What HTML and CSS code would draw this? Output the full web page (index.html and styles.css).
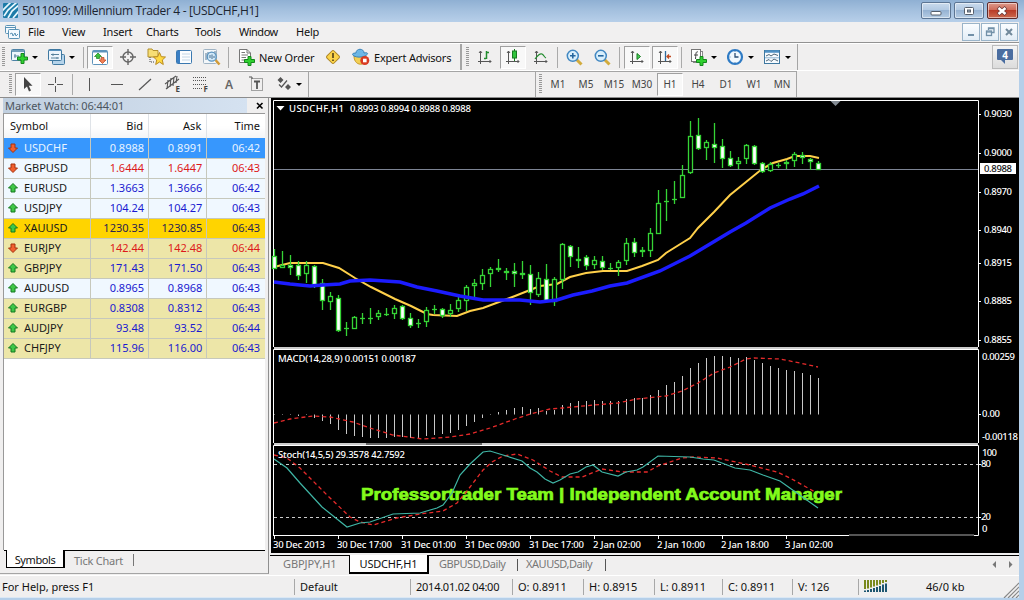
FILE: index.html
```html
<!DOCTYPE html>
<html>

<head>
    <meta charset="UTF-8">
    <title>Millennium Trader 4</title>
    <link rel="stylesheet" href="styles.css">
</head>

<body>
    <div class="titlebar">
        <svg class="logo" width="15" height="15" viewBox="0 0 15 15">
            <rect width="15" height="15" rx="1" fill="#1d7ba8"/>
            <path d="M-1 8 L8 -1 M1 13 L5 7 L14 -1 M5 15 L9 8 L16 2 M10 15 L16 8" stroke="#e8f8ff" stroke-width="1.7" fill="none"/>
        </svg>
        <span class="title">5011099: Millennium Trader 4 - [USDCHF,H1]</span>
        <div class="winbtns">
            <span class="winbtn"><svg width="30" height="15"><rect x="10" y="8.500" width="10" height="3.500" rx="1" fill="#fff" stroke="#555e6b"/></svg></span>
            <span class="winbtn"><svg width="30" height="15"><rect x="10.500" y="4.500" width="9" height="7" rx="1" fill="#fff" stroke="#555e6b"/><rect x="13.500" y="7" width="3" height="2" fill="#9ab" stroke="#555e6b"/></svg></span>
            <span class="winbtn close"><svg width="30" height="15"><path d="M11 4.500 L19 11.500 M19 4.500 L11 11.500" stroke="#6b3a3a" stroke-width="4"/><path d="M11.500 5 L18.500 11 M18.500 5 L11.500 11" stroke="#fff" stroke-width="2.500"/></svg></span>
        </div>
    </div>

    <div class="window">
        <div class="menubar">
            <svg class="menuicon" width="15" height="14" viewBox="0 0 15 14" fill="#f4faff" stroke="#5b93b5">
                <rect x=".5" y=".5" width="10" height="8" rx="1"/><path d="M1 2.500 H10"/>
                <rect x="3.500" y="4.500" width="11" height="9" rx="1"/><path d="M5 9 L7 8 L8 11 L10 8 L11 11 L13 9" fill="none"/>
            </svg>
            <span class="m-file">File</span><span class="m-view">View</span><span class="m-insert">Insert</span><span class="m-charts">Charts</span><span class="m-tools">Tools</span><span class="m-window">Window</span><span>Help</span>
            <div class="mdibtns">
                <span><svg width="16" height="16"><path d="M5 11 H11" stroke="#7190a8" stroke-width="2"/></svg></span>
                <span><svg width="16" height="16" fill="none" stroke="#7190a8" stroke-width="1.300"><path d="M6.500 6 V4 H12 V8.500 H10 M6.500 4.500 H12"/><rect x="4.500" y="7" width="5" height="4.500"/><path d="M4 8 H10"/></svg></span>
                <span><svg width="16" height="16"><path d="M5 5 L11 11 M11 5 L5 11" stroke="#71899b" stroke-width="2"/></svg></span>
            </div>
        </div>

        <div class="toolbar first">
            <i class="grip"></i>
            <span class="dd"><svg width="19" height="18" viewBox="0 0 19 18"><rect x=".5" y="1.500" width="13" height="11" rx="1" fill="#eef6fb" stroke="#4d82a6"/><path d="M1 3 H13" stroke="#4d82a6" stroke-width="1.500"/><path d="M3 8 H8 M4 6 V10" stroke="#58819c"/><path d="M10 5.500 h3 v3.500 h3.500 v3 h-3.500 v3.500 h-3 v-3.500 h-3.500 v-3 h3.500 z" fill="#2fd02f" stroke="#14861c"/></svg><b class="caret"></b></span>
            <span class="dd"><svg width="19" height="18" viewBox="0 0 19 18"><rect x="4.500" y="6.500" width="12" height="10" rx="1" fill="#b5d3ea" stroke="#3f78a0"/><rect x=".5" y="1.500" width="13" height="11" rx="1" fill="#edf5fc" stroke="#3f78a0"/><path d="M1 2.500 H13" stroke="#5590bd"/><path d="M3 6.500 H11 M3 10 H11 M5 5.500 V8 M9 9 V11" stroke="#58819c"/></svg><b class="caret"></b></span>
            <i class="sep"></i>
            <span class="tool on"><svg width="16" height="17" viewBox="0 0 16 17"><rect x=".5" y="1.500" width="15" height="14" rx="1" fill="#fff" stroke="#5d93bb"/><path d="M1 2.500 H15" stroke="#5d93bb" stroke-width="2"/><path d="M6 4 l3.500 3.500 h-2 v2 h-3 v-2 h-2 z" fill="#3cc23c" stroke="#1d8020" stroke-width=".7"/><path d="M10.500 14.500 l3.500 -3.500 h-2 v-2.500 h-3 v2.500 h-2 z" fill="#f08055" stroke="#b4421c" stroke-width=".7"/></svg></span>
            <span class="tool"><svg width="16" height="16" viewBox="0 0 16 16" fill="none" stroke="#666" stroke-width="1.400"><circle cx="8" cy="8" r="5"/><path d="M8 0 V6 M8 10 V16 M0 8 H6 M10 8 H16"/></svg></span>
            <span class="tool"><svg width="19" height="18" viewBox="0 0 19 18"><path d="M1 4 V1 H5 L6 2.500 H11 V9 H1 Z" fill="#f7de74" stroke="#b3902c"/><path d="M3 9 V14 H8" fill="none" stroke="#444" stroke-dasharray="1 1"/><path d="M12.500 4.500 L14.300 8.700 L18.500 9 L15.300 12 L16.300 16.500 L12.500 14 L8.700 16.500 L9.700 12 L6.500 9 L10.700 8.700 Z" fill="#ffd942" stroke="#b98a1c"/></svg></span>
            <span class="tool"><svg width="17" height="16" viewBox="0 0 17 16"><rect x=".5" y="1.500" width="15" height="13" rx="1" fill="#fbfdff" stroke="#3a78b0"/><rect x="1" y="2" width="3" height="12" fill="#3b7fc4"/><path d="M6 5 H14 M6 8 H14 M6 11 H14" stroke="#c3d6e6"/></svg></span>
            <span class="tool"><svg width="18" height="18" viewBox="0 0 18 18"><rect x=".5" y="1.500" width="13" height="14" rx="1" fill="#f3f7fa" stroke="#9fb3c4"/><path d="M3 12 V5 M5 10 V4 M12 8 V3" stroke="#5b7b95"/><path d="M12.500 12 L16.500 16.500" stroke="#d29a35" stroke-width="2.500"/><circle cx="8.700" cy="8.700" r="4.500" fill="#cbe6f8" fill-opacity=".85" stroke="#5a93bf" stroke-width="1.300"/><path d="M7 10 V7 M9 11 V6.500 M11 10 V8" stroke="#486f90"/></svg></span>
            <i class="sep order"></i>
            <span class="tool text neworder"><svg width="18" height="18" viewBox="0 0 18 18"><path d="M1.500 1.500 H9 L12.500 5 V14.500 H1.500 Z" fill="#fff" stroke="#777"/><path d="M9 1.500 V5 H12.500 M3.500 4.500 H7 M3.500 7 H10 M3.500 9.500 H8 M3.500 12 H7" fill="none" stroke="#777"/><path d="M10 8.500 h3 v3 h3.500 v3 h-3.500 v3 h-3 v-3 h-3.500 v-3 h3.500 z" fill="#2fd02f" stroke="#14861c"/></svg><span>New Order</span></span>
            <span class="tool"><svg width="16" height="16" viewBox="0 0 16 16"><rect x="3" y="3" width="10" height="10" rx="1.500" transform="rotate(45 8 8)" fill="#fbd34a" stroke="#ad8422"/><path d="M8 4 V9 M8 10.500 V12" stroke="#5a4617" stroke-width="1.700"/></svg></span>
            <span class="tool text expert"><svg width="18" height="18" viewBox="0 0 18 18"><path d="M2 8 C2 14 6 17 10 16 C14 15 14 10 14 8 Z" fill="#f2cf54" stroke="#c79a2a"/><path d="M4 5 C4 0 12 0 12 5 C16 4 17 6 13 8 C9 9.500 5 9.500 2 8 C-1 6 1 5 4 5 Z" fill="#6db7e6" stroke="#3a83b9"/><circle cx="12.800" cy="12.500" r="4.500" fill="#d93a22"/><rect x="11" y="10.700" width="3.600" height="3.600" fill="#fff"/></svg><span>Expert Advisors</span></span>
            <i class="barend"></i>
            <i class="grip"></i>
            <span class="tool"><svg width="16" height="16" viewBox="0 0 16 16" fill="none" stroke="#555"><path d="M3.500 2 V15 M1 12.500 H14 M2 4 L3.500 2 L5 4 M12.500 11 L14 12.500 L12.500 14"/><path d="M9.500 2 V10 M9 3.500 H12 M7 9.500 H9" stroke="#218c2d" stroke-width="1.500"/></svg></span>
            <span class="tool on"><svg width="16" height="16" viewBox="0 0 16 16" fill="none" stroke="#555"><path d="M3.500 2 V15 M1 12.500 H14 M2 4 L3.500 2 L5 4 M12.500 11 L14 12.500 L12.500 14"/><path d="M9.500 0 V12" stroke="#177a20"/><rect x="7.500" y="2" width="4" height="7" fill="#30c43c" stroke="#177a20"/></svg></span>
            <span class="tool"><svg width="16" height="16" viewBox="0 0 16 16" fill="none" stroke="#555"><path d="M3.500 2 V15 M1 12.500 H14 M2 4 L3.500 2 L5 4 M12.500 11 L14 12.500 L12.500 14"/><path d="M2 10 C5 6 7 4 9 5 C11 6 11 8 13 9" stroke="#218c2d" stroke-width="1.200"/></svg></span>
            <i class="sep"></i>
            <span class="tool"><svg width="17" height="17" viewBox="0 0 17 17"><path d="M10.500 10.500 L15.500 15.500" stroke="#d2ab3c" stroke-width="3"/><circle cx="6.800" cy="6.800" r="5.500" fill="#d9effc" stroke="#4288c2" stroke-width="1.500"/><path d="M4 6.800 H9.600 M6.800 4 V9.600" stroke="#26679f" stroke-width="1.600"/></svg></span>
            <span class="tool"><svg width="17" height="17" viewBox="0 0 17 17"><path d="M10.500 10.500 L15.500 15.500" stroke="#d2ab3c" stroke-width="3"/><circle cx="6.800" cy="6.800" r="5.500" fill="#d9effc" stroke="#4288c2" stroke-width="1.500"/><path d="M4 6.800 H9.600" stroke="#26679f" stroke-width="1.600"/></svg></span>
            <i class="sep mid"></i>
            <span class="tool on"><svg width="16" height="16" viewBox="0 0 16 16" fill="none" stroke="#555"><path d="M3.500 2 V15 M1 12.500 H14 M2 4 L3.500 2 L5 4 M12.500 11 L14 12.500 L12.500 14"/><path d="M8 4.500 L11.500 7.500 L8 10.500 Z" fill="#4cd35a" stroke="#177a20"/></svg></span>
            <span class="tool on"><svg width="16" height="16" viewBox="0 0 16 16" fill="none" stroke="#555"><path d="M3.500 2 V15 M1 12.500 H14 M2 4 L3.500 2 L5 4 M12.500 11 L14 12.500 L12.500 14"/><path d="M8.500 2 V12" stroke="#2d6a9d" stroke-width="1.300"/><path d="M10 7.500 H14 M12 5.500 L10 7.500 L12 9.500" stroke="#c04a20" stroke-width="1.300"/></svg></span>
            <i class="sep order"></i>
            <span class="dd"><svg width="18" height="18" viewBox="0 0 18 18"><rect x="3.500" y="3.500" width="9" height="11" fill="#fff" stroke="#888"/><rect x="1.500" y="1.500" width="9" height="12" fill="#fff" stroke="#777"/><path d="M8 4 C5.500 3 6 6 5.500 11 M4 7 H8" fill="none" stroke="#444"/><path d="M10 8.500 h3 v3 h3.500 v3 h-3.500 v3 h-3 v-3 h-3.500 v-3 h3.500 z" fill="#2fd02f" stroke="#14861c"/></svg><b class="caret"></b></span>
            <span class="dd"><svg width="18" height="18" viewBox="0 0 18 18"><circle cx="8" cy="9" r="7" fill="#f2f9ff" stroke="#2f7bc4" stroke-width="2.200"/><path d="M8 5 V9 H11.500" fill="none" stroke="#2d4f75" stroke-width="1.300"/><path d="M8 3 V4 M8 14 V15 M2.500 9 H3.500" stroke="#5d85ad"/></svg><b class="caret"></b></span>
            <span class="dd"><svg width="18" height="18" viewBox="0 0 18 18"><rect x=".5" y="2.500" width="15" height="13" fill="#f7fbff" stroke="#3f78a0"/><path d="M1 3.500 H15" stroke="#4f90c4" stroke-width="2.500"/><path d="M2 8 L5 6.500 L7 8 L10 6 L14 7.500 M2 13 L5 11.500 L7 13.500 L10 11 L14 13" fill="none" stroke="#4d6475"/><path d="M1 9.800 H15" stroke="#8fb4d0"/></svg><b class="caret"></b></span>
            <i class="edge"></i>
            <span class="chat"><svg width="18" height="18" viewBox="0 0 18 18"><path d="M2 1 H16 Q17 1 17 2 V11 Q17 12 16 12 H9 V16 L5 12 H2 Q1 12 1 11 V2 Q1 1 2 1 Z" fill="#4a6da0"/><text x="9" y="10.500">4</text></svg></span>
        </div>

        <div class="toolbar second">
            <i class="grip"></i>
            <span class="tool on"><svg width="16" height="17" viewBox="0 0 16 17"><path d="M4 1 V13 L7 10.500 L9 15.500 L11 14.500 L8.800 9.800 H12.500 Z" fill="#444"/></svg></span>
            <span class="tool"><svg width="16" height="16" viewBox="0 0 16 16" stroke="#555"><path d="M7.500 1 V7 M7.500 10 V16 M0 8.500 H6 M9 8.500 H15"/></svg></span>
            <i class="sep"></i>
            <span class="tool"><svg width="16" height="16" viewBox="0 0 16 16" stroke="#555"><path d="M8.500 2 V15"/></svg></span>
            <span class="tool"><svg width="16" height="16" viewBox="0 0 16 16" stroke="#555"><path d="M2 8.500 H14"/></svg></span>
            <span class="tool"><svg width="16" height="16" viewBox="0 0 16 16" stroke="#555"><path d="M2 14 L14 3" stroke-width="1.200"/></svg></span>
            <span class="tool"><svg width="18" height="18" viewBox="0 0 18 18" stroke="#555"><path d="M1 9 L12 1 M2 14 L15 4 M4 5 L3 14 M7 3 L6 12 M10 2 L9 11 M13 1 L12 8" stroke-width="1.100"/><text x="11.500" y="17">E</text></svg></span>
            <span class="tool"><svg width="18" height="18" viewBox="0 0 18 18" stroke="#555"><path d="M1 2.500 H15 M1 5.500 H15 M1 9.500 H15 M1 13.500 H10" stroke-dasharray="1 1"/><text x="11.500" y="17">F</text></svg></span>
            <span class="tool letter">A</span>
            <span class="tool"><svg width="16" height="16" viewBox="0 0 16 16" stroke="#555" fill="none"><rect x="2.500" y="2.500" width="11" height="12" stroke-dasharray="1 1"/><path d="M5 5.500 H11 M8 5 V13" stroke-width="1.800"/><path d="M0 1 H3 V3"/></svg></span>
            <span class="dd arrows"><svg width="15" height="14" viewBox="0 0 15 14" fill="#555"><path d="M3.500 0 L6.500 3 L3.500 6 L.5 3 Z M11 7 L14 10 L11 13 L8 10 Z"/><path d="M2 7.500 L4.500 10 L10 3.500" fill="none" stroke="#555" stroke-width="1.200"/></svg><b class="caret"></b></span>
            <i class="edge"></i>
            <div class="periods">
                <i class="grip"></i>
                <span class="tool">M1</span><span class="tool">M5</span><span class="tool">M15</span><span class="tool">M30</span><span class="tool on">H1</span><span class="tool">H4</span><span class="tool">D1</span><span class="tool">W1</span><span class="tool">MN</span>
            </div>
        </div>

        <div class="content">
            <div class="watch">
                <div class="watch-title"><span>Market Watch: 06:44:01</span><svg width="8" height="8"><path d="M1 1 L6.500 6.500 M6.500 1 L1 6.500" stroke="#000" stroke-width="1.600"/></svg></div>
                <div class="watch-body">
                    <table>
                        <thead>
                            <tr><th class="sym">Symbol</th><th>Bid</th><th>Ask</th><th>Time</th></tr>
                        </thead>
                        <tbody id="symbols"></tbody>
                    </table>
                </div>
                <div class="watch-tabs"><span class="active">Symbols</span><span class="tick">Tick Chart</span></div>
            </div>

            <div class="chartwin">
                <svg class="chart" width="748" height="455" viewBox="271 98 748 455">
                    <rect x="271" y="98" width="748" height="455" fill="#000"/>
                    <path d="M273.500 347 V100.500 H978.500 V347" class="frame"/>
                    <path d="M274 348 H978" stroke="#ccc" stroke-width="2"/>
                    <path d="M273.500 443 V349.500 H978.500 V443" class="frame"/>
                    <path d="M274 444 H978" stroke="#ccc" stroke-width="2"/>
                    <path d="M366 444 H482" stroke="#000"/>
                    <path d="M273.500 535 V445.500 H978.500 V535.500 H273" class="frame"/>
                    <path d="M849 535 H974" stroke="#555" stroke-width="2"/>
                    <path d="M274 169.500 H978" stroke="#7d8494"/>
                    <path d="M830.500 101 H840.500 L835.500 106 Z" fill="#848c94"/>
                    <path d="M276.500 106 H284.500 L280.500 110.500 Z" fill="#fff"/>

                    <g id="macd"></g>
                    <polyline class="red" points="274,423 290,419 313,416 330,417 353,422 370,428 393,435 423,439 450,437 470,434 490,428 515,419 530,414 550,409 562,408 594,405 618,403 637,399 666,396 682,391 698,383 714,373 730,367 746,359 754,358 780,359 800,363 818,367"/>

                    <path d="M274 464.500 H978 M274 517.500 H978" stroke="#ccc" stroke-dasharray="3 3"/>
                    <text class="promo" x="361" y="500" textLength="481" lengthAdjust="spacingAndGlyphs">Professortrader Team | Independent Account Manager</text>
                    <polyline class="red" points="274,455 287,458 300,468 327,495 350,517 360,522 373,525 397,518 420,514 443,511 457,503 467,491 483,470 492,462 503,456 517,454 533,460 550,471 562,477 582,477 602,469 623,472 647,472 658,466 682,458 693,457 717,458 750,465 777,472 790,478 815,492"/>
                    <polyline class="teal" points="274,459 287,468 300,483 322,507 347,527 360,523 370,522 393,514 420,513 437,508 443,505 452,493 460,475 470,464 483,452 490,451 503,455 522,461 530,468 537,472 545,479 553,483 560,480 570,474 578,472 586,467 593,465 602,472 618,476 626,472 637,470 643,467 658,456 690,457 703,459 714,460 735,468 750,470 763,475 780,481 818,508"/>

                    <polyline class="ma" points="274,267 290,263 323,263 339,268 355,278 371,287 395,299 411,306 427,314 433,315 457,316 470,311 483,308 499,302 515,296 530,290 540,286 557,284 570,277 586,273 603,271 627,271 642,266 658,260 666,253 682,243 690,238 698,228 714,212 730,195 746,182 762,169 773,163 787,159 795,156 810,156 819,158"/>
                    <g id="candles"></g>
                    <polyline class="slow" points="274,282 290,284 310,286 323,285 340,284 350,281 370,280 400,282 417,287 437,291 460,296 483,300 520,300 540,302 557,300 573,295 592,291 610,286 627,283 660,271 690,256 730,232 746,223 770,208 790,199 803,194 819,186"/>

                    <text x="289" y="112" textLength="55">USDCHF,H1</text>
                    <text x="350" y="112" textLength="121">0.8993 0.8994 0.8988 0.8988</text>
                    <text x="278" y="362" textLength="138">MACD(14,28,9) 0.00151 0.00187</text>
                    <text x="278" y="458" textLength="127">Stoch(14,5,5) 29.3578 42.7592</text>

                    <path d="M979 114.500 h2 M979 153.500 h2 M979 192.500 h2 M979 230.500 h2 M979 263.500 h2 M979 301.500 h2 M979 340.500 h2 M979 414.500 h2 M979 464.500 h2 M979 517.500 h2" stroke="#fff"/>
                    <path d="M274.500 536 v3 M338.500 536 v3 M402.500 536 v3 M466.500 536 v3 M530.500 536 v3 M594.500 536 v3 M658.500 536 v3 M722.500 536 v3 M786.500 536 v3" stroke="#fff"/>
                    <text x="984" y="117" textLength="28">0.9030</text>
                    <text x="984" y="156" textLength="28">0.9000</text>
                    <rect x="980" y="163" width="36" height="11" fill="#fff"/>
                    <text x="984" y="172" textLength="28" class="now">0.8988</text>
                    <text x="984" y="195" textLength="28">0.8970</text>
                    <text x="984" y="233" textLength="28">0.8940</text>
                    <text x="984" y="266" textLength="28">0.8915</text>
                    <text x="984" y="304" textLength="28">0.8885</text>
                    <text x="984" y="343" textLength="28">0.8855</text>
                    <text x="982" y="360" textLength="33">0.00259</text>
                    <text x="982" y="417" textLength="18">0.00</text>
                    <text x="982" y="440" textLength="36">-0.00118</text>
                    <text x="982" y="456" textLength="15">100</text>
                    <text x="981" y="467" textLength="10">80</text>
                    <text x="981" y="520" textLength="10">20</text>
                    <text x="982" y="532">0</text>

                    <text x="273" y="548" textLength="52">30 Dec 2013</text>
                    <text x="337" y="548" textLength="55">30 Dec 17:00</text>
                    <text x="401" y="548" textLength="55">31 Dec 01:00</text>
                    <text x="465" y="548" textLength="55">31 Dec 09:00</text>
                    <text x="529" y="548" textLength="55">31 Dec 17:00</text>
                    <text x="593" y="548" textLength="48">2 Jan 02:00</text>
                    <text x="657" y="548" textLength="48">2 Jan 10:00</text>
                    <text x="721" y="548" textLength="48">2 Jan 18:00</text>
                    <text x="785" y="548" textLength="48">3 Jan 02:00</text>
                </svg>
                <div class="chart-tabs">
                    <span class="t-first">GBPJPY,H1</span><span class="active">USDCHF,H1</span><span class="t-daily">GBPUSD,Daily</span><i></i><span class="t-last">XAUUSD,Daily</span><i></i>
                    <svg width="24" height="8"><path d="M5 0 V7 L1.500 3.500 Z M18 0 V7 L21.500 3.500 Z" fill="#777"/></svg>
                </div>
            </div>
        </div>

        <div class="status">
            <span class="s-help">For Help, press F1</span>
            <span class="s-def">Default</span>
            <span class="s-date">2014.01.02 04:00</span>
            <span class="s-price">O: 0.8911</span>
            <span class="s-price">H: 0.8915</span>
            <span class="s-low">L: 0.8911</span>
            <span class="s-close">C: 0.8911</span>
            <span class="s-vol">V: 126</span>
            <span class="s-net">
                <svg width="24" height="13" viewBox="0 0 24 13"><path d="M1 0 V9 M4 0 V8.500 M7 0 V7.500 M10 0 V6.500 M13 0 V5.500 M16 0 V4.500 M19 0 V3 M22 0 V2" stroke="#7a8a1e" stroke-width="2"/><path d="M1 10.500 V12 M4 10 V12 M7 9 V12 M10 8 V12 M13 7 V12 M16 6 V12 M19 4.500 V12 M22 3.500 V12" stroke="#1d5670" stroke-width="2"/></svg>
                <b>46/0 kb</b>
            </span>
            <svg class="resize" width="16" height="16"><path d="M1 16 L16 1 M5 16 L16 5 M9 16 L16 9 M13 16 L16 13" stroke="#888" stroke-width="1.200"/></svg>
        </div>
    </div>
    <script src="script.js"></script>
</body>

</html>
```
FILE: styles.css
```css
* {
    box-sizing: border-box;
}

body {
    margin: 0;
    width: 1024px;
    height: 600px;
    overflow: hidden;
    background-color: #b5cfe9;
    font-family: "Noto Sans", "Liberation Sans", sans-serif;
    font-size: 11px;
    color: #111;
    white-space: nowrap;
}

i,
b {
    font-style: normal;
    font-weight: normal;
}

svg {
    display: block;
    flex: none;
}

/* title bar */
.titlebar {
    display: flex;
    align-items: flex-start;
    height: 22px;
    padding: 2px 6px 0 3px;
    background: linear-gradient(#8fb0d3, #a5c1df 50%, #b7cfe9);
}

.logo {
    margin: 1px 4px 0 0;
}

.title {
    font-family: "Open Sans", sans-serif;
    font-size: 12px;
    line-height: 17px;
    letter-spacing: -0.34px;
    color: #1c2430;
}

.winbtns {
    display: flex;
    gap: 3px;
    margin-left: auto;
}

.winbtn {
    width: 30px;
    height: 17px;
    border: 1px solid #5c7593;
    border-radius: 2px;
    background: linear-gradient(#c9daec, #b3cae3 45%, #96b3d3 50%, #b5cce4);
    box-shadow: inset 0 0 0 1px rgba(255, 255, 255, 0.5);
}

.winbtn svg {
    margin-left: -1px;
}

.winbtn.close {
    width: 31px;
    border-color: #5d2a2a;
    background: linear-gradient(#dd9a8c, #cf6c5a 45%, #b93c28 50%, #cc6a4f);
}

/* window */
.window {
    width: 1019px;
    height: 576px;
    background-color: #f0efef;
    border-bottom: 1px solid #dce8f4;
}

.menubar {
    display: flex;
    align-items: center;
    height: 21px;
    padding-left: 5px;
    border-bottom: 1px solid #929292;
    background-color: #f1f0f0;
    letter-spacing: -0.2px;
}

.menubar > span {
    margin-top: -2px;
}

.menuicon {
    margin-right: 8px;
}

.m-file { width: 34px; }
.m-view { width: 41px; }
.m-insert { width: 43px; }
.m-charts { width: 49px; }
.m-tools { width: 44px; }
.m-window {
    width: 57px;
    letter-spacing: -0.5px;
}

.mdibtns {
    display: flex;
    gap: 1px;
    margin-left: auto;
    margin-right: 1px;
}

.mdibtns span {
    width: 18px;
    height: 18px;
    border: 1px solid #9ab4c9;
    background: linear-gradient(#fafdff, #e2edf6);
}

/* toolbars */
.toolbar {
    display: flex;
    align-items: center;
    height: 27px;
    border-top: 1px solid #fff;
}

.first {
    padding-left: 2px;
    border-bottom: 0;
}

.grip {
    flex: none;
    width: 3px;
    height: 20px;
    margin-right: 2px;
    background: repeating-linear-gradient(#999 0, #999 1px, #f0efef 1px, #f0efef 2px);
}

.tool {
    display: flex;
    flex: none;
    align-items: center;
    justify-content: center;
    width: 26px;
    height: 23px;
    margin: 0 1px;
    font-size: 10px;
    color: #444;
}

.tool.on {
    border: 1px solid;
    border-color: #a0a0a0 #fff #fff #a0a0a0;
    background-color: #f8f8f8;
}

.tool text {
    font-size: 8px;
    font-weight: bold;
    stroke: none;
    fill: #444;
}

.tool.letter {
    font-size: 12px;
    font-weight: 600;
    color: #666;
}

.tool.text {
    justify-content: flex-start;
    gap: 3px;
    margin: 0;
    padding-left: 5px;
    font-size: 11px;
    letter-spacing: -0.08px;
    color: #111;
}

.neworder {
    width: 86px;
}

.tool.expert {
    width: 113px;
    gap: 4px;
    letter-spacing: -0.2px;
}

.tool.text.neworder {
    width: 86px;
}

.dd {
    display: flex;
    flex: none;
    align-items: center;
    justify-content: space-between;
    width: 37px;
    padding: 0 6px 0 4px;
}

.caret {
    border: 3px solid transparent;
    border-top-color: #000;
    border-bottom: 0;
}

.sep {
    flex: none;
    width: 1px;
    height: 21px;
    margin: 0 2px;
    background-color: #aaa;
}

.sep.mid {
    margin: 0 3px;
}

.sep.order {
    margin: 0 4px 0 2px;
}

.barend {
    width: 2px;
    height: 26px;
    margin-right: 4px;
    background-color: #a5a5a5;
}

.edge {
    width: 1px;
    height: 26px;
    background-color: #a5a5a5;
}

.chat {
    display: flex;
    align-items: center;
    justify-content: center;
    width: 26px;
    height: 24px;
    margin-left: auto;
    margin-right: 1px;
    border: 1px solid #bbb;
    background: linear-gradient(#f5f5f5, #dcdcdc);
}

.chat text {
    font-size: 10px;
    font-weight: bold;
    text-anchor: middle;
    fill: #fff;
}

.second {
    height: 28px;
    padding-left: 9px;
    border-bottom: 1px solid #8c8c8c;
    background: linear-gradient(90deg, #a5a5a5, #a5a5a5) 0 0 / 797px 1px no-repeat;
}

.second .arrows {
    width: 37px;
    padding-left: 6px;
}

.periods {
    display: flex;
    align-items: center;
    width: 262px;
    height: 26px;
    margin-left: 226px;
    padding-left: 3px;
    border-left: 1px solid #a5a5a5;
    border-right: 1px solid #a5a5a5;
}

/* market watch */
.content {
    display: flex;
    height: 477px;
}

.watch {
    display: flex;
    flex-direction: column;
    width: 269px;
    height: 476px;
    padding-left: 3px;
    border-right: 1px solid #8f8f8f;
    border-bottom: 1px solid #a5a5a5;
}

.watch-title {
    display: flex;
    align-items: center;
    justify-content: space-between;
    height: 15px;
    padding: 0 4px 0 2px;
    background: linear-gradient(90deg, #c0cfdf, #d5e2f1 92%, #f0efef 92%);
    letter-spacing: -0.1px;
    color: #4c555e;
}

.watch-title span {
    margin-top: -1px;
}

.watch-body {
    flex: 1;
    margin-right: 3px;
    border: 1px solid #999;
    border-width: 1px 0 0 1px;
    background-color: #fff;
}

table {
    width: 261px;
    table-layout: fixed;
    border-collapse: collapse;
}

th {
    width: 58px;
    height: 24px;
    padding: 0 5px 2px 0;
    border-right: 1px solid #dfe3e8;
    background: linear-gradient(#fff 50%, #f3f4f6);
    font-weight: normal;
    text-align: right;
}

th.sym {
    width: 86px;
    padding-left: 6px;
    text-align: left;
}

td {
    height: 20px;
    padding: 0 4px 0 0;
    border-right: 1px solid #c6c8bc;
    border-bottom: 1px solid #c6c8bc;
    background-color: #f0f8ff;
    text-align: right;
    color: #1a1ad0;
    line-height: 18px;
}

th:last-child,
td:last-child {
    padding-right: 5px;
    border-right: 0;
}

td.name {
    text-align: left;
}

td.name svg {
    display: inline-block;
    margin: 0 6px 0 4px;
    vertical-align: -1px;
}

.khaki td {
    background-color: #ede6a8;
}

.gold td {
    background-color: #ffd400;
    color: #2a2350;
}

.down td {
    color: #dd1a1a;
}

td.name,
.down td.name,
.gold td.name {
    color: #1a1a1a;
}

.selected td,
.down.selected td.name {
    background-color: #3797fd;
    color: #e9f4ff;
}

.watch-tabs {
    display: flex;
    height: 23px;
    margin: 0 3px 0 1px;
    padding-left: 2px;
    border-top: 1px solid #000;
    color: #777;
}

.watch-tabs .active {
    width: 59px;
    height: 18px;
    margin-top: -1px;
    border: 1px solid #000;
    border-top: 0;
    border-right-width: 2px;
    background-color: #fff;
    color: #111;
    line-height: 19px;
    text-align: center;
    letter-spacing: -0.4px;
}

.watch-tabs .tick {
    height: 12px;
    margin-top: 3px;
    padding: 0 10px 0 9px;
    border-right: 1px solid #777;
    line-height: 13px;
    letter-spacing: -0.25px;
}

/* chart window */
.chartwin {
    width: 750px;
    padding-left: 1px;
    margin-left: 1px;
    background-color: #f0efef;
}

.chart text {
    font-size: 9.5px;
    font-weight: 500;
    fill: #fff;
}

.chart text.now {
    fill: #111;
}

.chart text.promo {
    font-family: "Liberation Sans", Arial, sans-serif;
    font-size: 16.5px;
    font-weight: bold;
    fill: #82fb1c;
    stroke: #82fb1c;
    stroke-width: 0.7;
}

.chart polyline {
    fill: none;
}

.frame {
    fill: none;
    stroke: #fff;
}

.red {
    stroke: #e62a2a;
    stroke-width: 1.3;
    stroke-dasharray: 4 3;
}

.teal {
    stroke: #3fb5a5;
    stroke-width: 1.2;
}

.ma {
    stroke: #ffd04a;
    stroke-width: 2;
}

.slow {
    stroke: #1c1cff;
    stroke-width: 3.5;
}

.chart-tabs {
    display: flex;
    height: 19px;
    margin: 2px 0 0 -1px;
    border-top: 1px solid #000;
    color: #777;
    line-height: 16px;
    letter-spacing: -0.1px;
}

.chart-tabs .active {
    width: 80px;
    height: 19px;
    margin-top: -1px;
    border: 1px solid #000;
    border-top: 0;
    border-right-width: 2px;
    border-bottom-width: 2px;
    background-color: #fff;
    color: #111;
    line-height: 18px;
    text-align: center;
    letter-spacing: -0.2px;
}

.chart-tabs i {
    width: 1px;
    height: 12px;
    margin-top: 3px;
    background-color: #555;
}

.t-first {
    width: 79px;
    padding-left: 13px;
}

.t-daily {
    width: 88px;
    padding-left: 10px;
    letter-spacing: -0.45px;
}

.t-last {
    width: 87px;
    padding-left: 8px;
    letter-spacing: -0.45px;
}

.chart-tabs svg {
    margin: 5px 4px 0 auto;
}

/* status bar */
.status {
    display: flex;
    align-items: center;
    height: 22px;
    border-top: 1px solid #fff;
}

.status > span {
    height: 16px;
    line-height: 16px;
    padding-left: 5px;
    border-left: 1px solid #a8a8a8;
}

.status .s-help {
    width: 294px;
    padding-left: 2px;
    border: 0;
}

.s-def { width: 116px; }
.s-date {
    width: 102px;
    letter-spacing: -0.25px;
}
.s-price { width: 71px; }
.s-low { width: 68px; }
.s-close { width: 70px; }
.s-vol { width: 66px; }

.s-net {
    display: flex;
    align-items: center;
    gap: 38px;
}

.resize {
    margin: 6px 0 0 auto;
}
```
FILE: script.js
```js
// symbol, bid, ask, time, direction, row class
var symbols = [
    ['USDCHF', '0.8988', '0.8991', '06:42', 'down', 'selected'],
    ['GBPUSD', '1.6444', '1.6447', '06:43', 'down', ''],
    ['EURUSD', '1.3663', '1.3666', '06:42', 'up', ''],
    ['USDJPY', '104.24', '104.27', '06:43', 'up', ''],
    ['XAUUSD', '1230.35', '1230.85', '06:43', 'up', 'gold'],
    ['EURJPY', '142.44', '142.48', '06:44', 'down', 'khaki'],
    ['GBPJPY', '171.43', '171.50', '06:43', 'up', 'khaki'],
    ['AUDUSD', '0.8965', '0.8968', '06:43', 'up', ''],
    ['EURGBP', '0.8308', '0.8312', '06:43', 'up', 'khaki'],
    ['AUDJPY', '93.48', '93.52', '06:44', 'up', 'khaki'],
    ['CHFJPY', '115.96', '116.00', '06:43', 'up', 'khaki']
];

var arrows = {
    up: '<svg width="10" height="10" viewBox="0 0 10 10"><path d="M5 .5 L9.500 5 H7 V9 H3 V5 H.5 Z" fill="#3fc748" stroke="#15791f"/></svg>',
    down: '<svg width="10" height="10" viewBox="0 0 10 10"><path d="M5 9.500 L9.500 5 H7 V1 H3 V5 H.5 Z" fill="#f2602f" stroke="#a3330f"/></svg>'
};

var rows = '';
for (var i = 0; i < symbols.length; i++) {
    var s = symbols[i];
    rows += '<tr class="' + s[4] + ' ' + s[5] + '">';
    rows += '<td class="name">' + arrows[s[4]] + s[0] + '</td>';
    rows += '<td>' + s[1] + '</td><td>' + s[2] + '</td><td>' + s[3] + '</td>';
    rows += '</tr>';
}
document.getElementById('symbols').innerHTML = rows;

// high, body top, body bottom, low, filled
var candles = [
    [249, 256, 268, 268, 1], [251, 265, 267, 267, 0], [255, 265, 267, 274, 1], [261, 265, 275, 279, 1],
    [261, 265, 273, 282, 0], [265, 266, 284, 287, 1], [279, 283, 300, 309, 1], [292, 296, 301, 309, 0],
    [295, 298, 330, 331, 1], [322, 328, 328, 335, 0], [316, 317, 328, 328, 0], [313, 318, 318, 323, 0],
    [308, 318, 318, 323, 0], [310, 313, 316, 319, 0], [308, 314, 314, 315, 0], [305, 308, 313, 318, 0],
    [305, 306, 318, 319, 1], [313, 318, 325, 327, 1], [319, 323, 323, 327, 0], [307, 310, 321, 326, 0],
    [305, 309, 309, 313, 0], [308, 309, 315, 317, 1], [304, 310, 313, 316, 0], [297, 300, 308, 311, 0],
    [285, 287, 300, 310, 0], [279, 283, 285, 296, 0], [269, 275, 283, 289, 0], [267, 269, 273, 286, 0],
    [259, 268, 269, 271, 1], [268, 271, 272, 279, 1], [263, 271, 273, 286, 1], [261, 273, 274, 278, 1],
    [265, 274, 292, 304, 1], [272, 278, 294, 296, 0], [264, 279, 300, 301, 1], [277, 279, 301, 305, 0],
    [243, 244, 279, 288, 0], [245, 246, 256, 266, 1], [247, 259, 260, 267, 0], [255, 257, 265, 269, 1],
    [256, 260, 264, 268, 0], [256, 261, 267, 269, 1], [263, 268, 268, 269, 0], [260, 262, 267, 275, 0],
    [238, 243, 260, 264, 0], [238, 242, 252, 256, 1], [247, 250, 251, 256, 0], [228, 233, 250, 256, 0],
    [190, 203, 233, 233, 0], [189, 201, 201, 220, 0], [181, 199, 199, 203, 0], [165, 175, 197, 197, 0],
    [121, 136, 172, 173, 0], [118, 135, 148, 149, 1], [140, 142, 147, 159, 0], [123, 144, 147, 162, 1],
    [139, 146, 158, 167, 1], [151, 158, 165, 166, 1], [157, 161, 163, 168, 0], [144, 145, 158, 163, 0],
    [145, 146, 163, 164, 1], [162, 163, 171, 172, 1], [162, 164, 170, 171, 0], [163, 165, 165, 167, 0],
    [160, 162, 163, 168, 0], [152, 154, 160, 166, 0], [152, 155, 157, 163, 1], [158, 159, 161, 169, 1],
    [161, 163, 169, 169, 1]
];

var macd = [
    415, 415, 415, 416, 415, 418, 421, 424, 430, 434, 436, 437, 438, 438, 438, 437, 437, 438, 438, 436,
    435, 434, 433, 430, 426, 422, 418, 414, 412, 410, 408, 407, 409, 408, 411, 410, 405, 403, 401, 401,
    400, 401, 401, 401, 399, 398, 398, 395, 390, 385, 382, 376, 368, 363, 358, 356, 356, 357, 358, 357,
    360, 363, 366, 368, 370, 371, 373, 375, 378
];

var body = '';
var bars = '';
for (i = 0; i < candles.length; i++) {
    var c = candles[i];
    var x = 274.5 + i * 8;
    body += '<path d="M' + x + ' ' + c[0] + ' V' + (c[3] + 1) + '" stroke="#35d435" stroke-width="1.3"/>';
    if (c[1] == c[2]) {
        body += '<path d="M' + (x - 2.5) + ' ' + (c[1] + 0.5) + ' h5" stroke="#35d435" stroke-width="1.3"/>';
    } else {
        body += '<rect x="' + (x - 2) + '" y="' + (c[1] + 0.5) + '" width="4" height="' + (c[2] - c[1]) + '" fill="' + (c[4] ? '#fff' : '#000') + '" stroke="#35d435" stroke-width="1.3"/>';
    }
    bars += '<path d="M' + x + ' 414.500 V' + macd[i] + '" stroke="#c8c8c8"/>';
}
document.getElementById('candles').innerHTML = body;
document.getElementById('macd').innerHTML = bars;
```
